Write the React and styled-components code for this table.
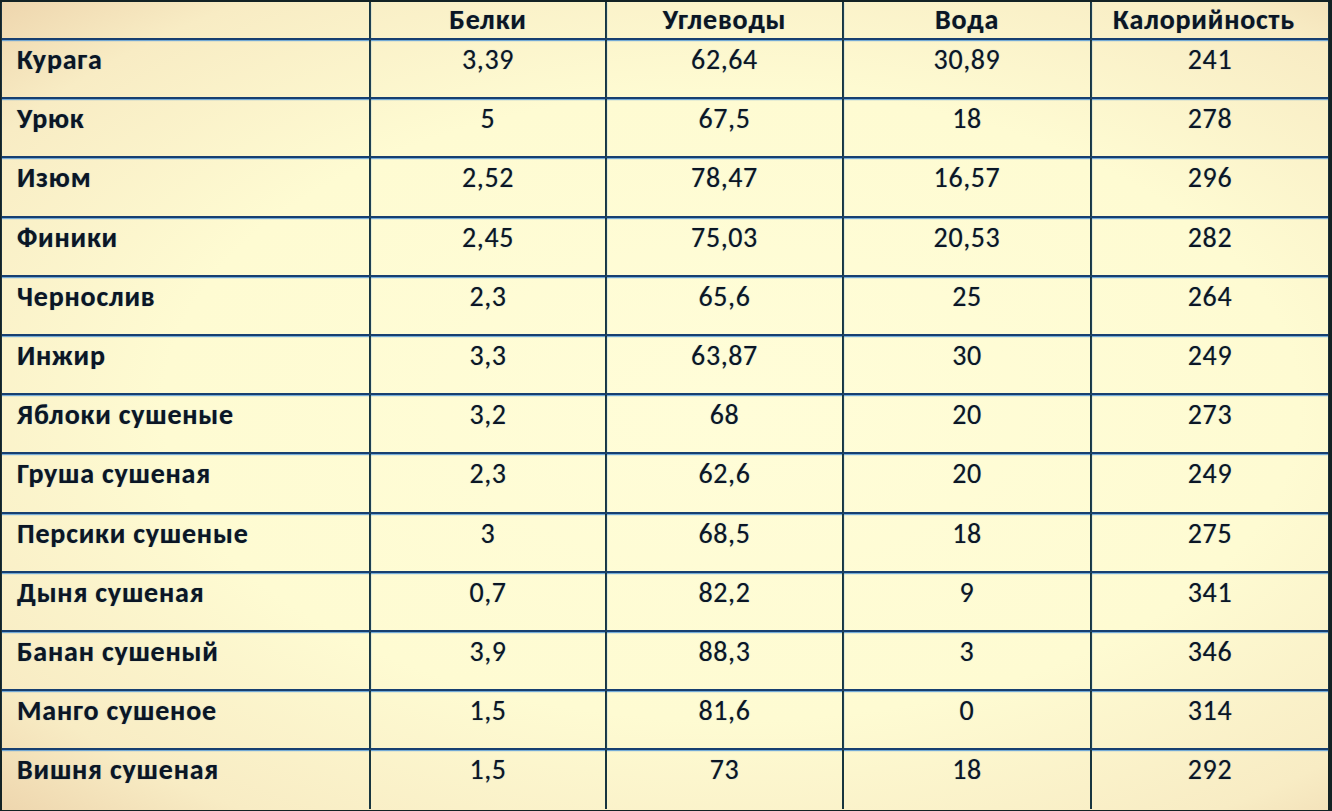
import React from "react";
import styled, { createGlobalStyle } from "styled-components";

const rows = [
  ["Курага", "3,39", "62,64", "30,89", "241"],
  ["Урюк", "5", "67,5", "18", "278"],
  ["Изюм", "2,52", "78,47", "16,57", "296"],
  ["Финики", "2,45", "75,03", "20,53", "282"],
  ["Чернослив", "2,3", "65,6", "25", "264"],
  ["Инжир", "3,3", "63,87", "30", "249"],
  ["Яблоки сушеные", "3,2", "68", "20", "273"],
  ["Груша сушеная", "2,3", "62,6", "20", "249"],
  ["Персики сушеные", "3", "68,5", "18", "275"],
  ["Дыня сушеная", "0,7", "82,2", "9", "341"],
  ["Банан сушеный", "3,9", "88,3", "3", "346"],
  ["Манго сушеное", "1,5", "81,6", "0", "314"],
  ["Вишня сушеная", "1,5", "73", "18", "292"],
];

const headers = ["", "Белки", "Углеводы", "Вода", "Калорийность"];

const GlobalStyle = createGlobalStyle`
  html, body {
    margin: 0;
    padding: 0;
    background: #132224;
  }
  body {
    font-family: Carlito, "Open Sans", "Noto Sans", sans-serif;
  }
`;

const Frame = styled.div`
  width: 1332px;
  height: 811px;
  padding: 2px 4px 1px 2px;
  box-sizing: border-box;
  background: #132224;
`;

const Table = styled.div`
  display: grid;
  grid-template-columns: 369px 236px 237px 248px 236px;
  grid-template-rows: 38px repeat(13, 59.2px);
  height: 100%;
  background: radial-gradient(
    ellipse at 55% 50%,
    #fffdd8 0%,
    #fefbd2 55%,
    #f8ecc4 85%,
    #eed6ae 100%
  );
`;

const Cell = styled.div`
  box-sizing: border-box;
  border-right: ${(p) => (p.last ? "none" : "2px solid #18353f")};
  border-bottom: ${(p) => (p.bottom ? "none" : "2px solid #173f70")};
  box-shadow: ${(p) =>
    p.bottom ? "none" : "0 1px 1px rgba(80, 150, 215, 0.8)"};
  display: flex;
  justify-content: ${(p) => (p.name ? "flex-start" : "center")};
  align-items: ${(p) => (p.head ? "center" : "flex-start")};
  padding: ${(p) => (p.head ? "0 0 2px" : "2px 0 0")};
  padding-left: ${(p) => (p.name ? "15px" : "0")};
  padding-right: ${(p) => (p.cal ? "12px" : "0")};
  font-size: 28px;
  font-weight: ${(p) => (p.name || p.head ? 700 : 400)};
  color: #0b1624;
  letter-spacing: ${(p) => (p.name || p.head ? "0.8px" : "0.6px")};
  white-space: nowrap;
  text-shadow: 0 0 1px rgba(30, 80, 160, 0.5);
`;

export default function App() {
  return (
    <>
      <GlobalStyle />
      <Frame>
        <Table>
          {headers.map((h, i) => (
            <Cell key={"h" + i} head last={i === 4} cal={i === 4}>
              {h}
            </Cell>
          ))}
          {rows.map((r, ri) =>
            r.map((v, ci) => (
              <Cell
                key={ri + "-" + ci}
                name={ci === 0}
                last={ci === 4}
                bottom={ri === rows.length - 1}
              >
                {v}
              </Cell>
            ))
          )}
        </Table>
      </Frame>
    </>
  );
}
